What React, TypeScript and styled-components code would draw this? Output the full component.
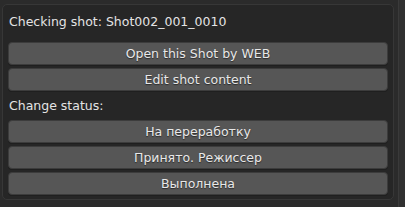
import React from 'react';
import styled, { createGlobalStyle } from 'styled-components';

const GlobalStyle = createGlobalStyle`
  html, body {
    margin: 0;
    padding: 0;
    background: #2b2b2b;
    font-family: "DejaVu Sans", "Noto Sans", sans-serif;
  }
`;

const Page = styled.div`
  display: flex;
  width: 405px;
  height: 207px;
  overflow: hidden;
`;

const Panel = styled.div`
  flex: 1;
  margin: 4px 4px 7px 2px;
  background: #262626;
  border: 1px solid #373737;
  border-radius: 5px;
  padding: 0 5px 4px 5px;
  display: flex;
  flex-direction: column;
`;

const Gutter = styled.div`
  width: 6px;
  background: #303030;
  border-left: 1px solid #3a3a3a;
`;

const Label = styled.div<{ $h: number; $pb: number }>`
  height: ${p => p.$h}px;
  display: flex;
  align-items: center;
  padding-left: 1px;
  padding-bottom: ${p => p.$pb}px;
  box-sizing: border-box;
  color: #e4e4e4;
  font-size: 12.5px;
`;

const Column = styled.div`
  display: flex;
  flex-direction: column;
  gap: 3px;
`;

const Button = styled.button`
  height: 23px;
  width: 100%;
  margin: 0;
  padding: 0;
  background: #565656;
  border: 1px solid #3c3c3c;
  border-radius: 4px;
  box-shadow: 0 1px 0 #1f1f1f;
  color: #e8e8e8;
  font-family: "DejaVu Sans", "Noto Sans", sans-serif;
  font-size: 12.5px;
  text-shadow: 0 1px 1px rgba(0, 0, 0, 0.5);
  cursor: pointer;
`;

const statuses = ['На переработку', 'Принято. Режиссер', 'Выполнена'];

export default function App() {
  return (
    <Page>
      <GlobalStyle />
      <Panel>
        <Label $h={37} $pb={4}>Checking shot: Shot002_001_0010</Label>
        <Column>
          <Button>Open this Shot by WEB</Button>
          <Button>Edit shot content</Button>
        </Column>
        <Label $h={29} $pb={0}>Change status:</Label>
        <Column>
          {statuses.map(s => (
            <Button key={s}>{s}</Button>
          ))}
        </Column>
      </Panel>
      <Gutter />
    </Page>
  );
}
